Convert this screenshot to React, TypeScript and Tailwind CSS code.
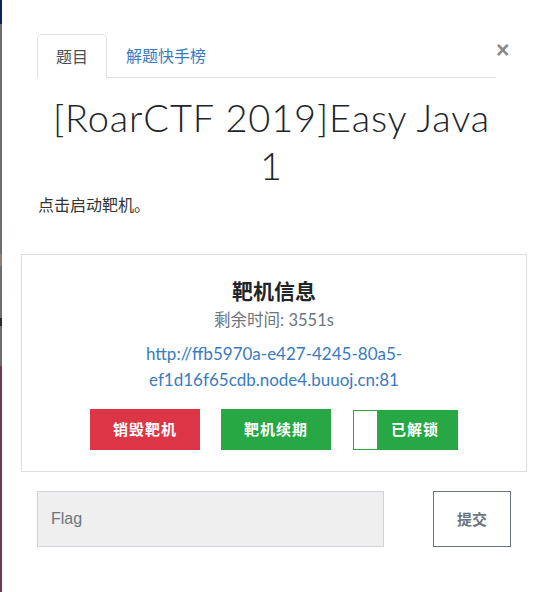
import React from "react";

export default function App() {
  return (
    <div className="w-[542px] h-[592px] flex bg-white overflow-hidden" style={{ fontFamily: "Lato, 'Noto Sans CJK SC', sans-serif" }}>
      <div className="w-[2px] h-full flex flex-col shrink-0">
        <div className="h-[24px] bg-[#0c2355]" />
        <div className="h-[206px] bg-[#6d6d6d]" />
        <div className="h-[4px] bg-[#5f7a5f]" />
        <div className="h-[20px] bg-[#6d6d6d]" />
        <div className="h-[12px] bg-[#8a7f70]" />
        <div className="h-[20px] bg-[#6d6d6d]" />
        <div className="h-[4px] bg-[#5f7a5f]" />
        <div className="h-[28px] bg-[#6d6d6d]" />
        <div className="h-[8px] bg-[#2a2a2a]" />
        <div className="h-[40px] bg-[#6d6d6d]" />
        <div className="flex-1 bg-[#6a3c52]" />
      </div>
      <div className="relative flex-1 flex flex-col">
        <button className="absolute left-[494px] top-[39px] text-[#8a8a8a] text-[23px] font-bold leading-none" style={{ fontFamily: "'Liberation Sans', Arial, sans-serif" }}>
          ×
        </button>
        <div className="mt-[34px] ml-[35px] w-[459px] flex border-b border-[#dee2e6] h-[44px]">
          <div className="w-[70px] h-[45px] border border-[#dee2e6] border-b-white rounded-t-[5px] bg-white flex items-center justify-center text-[16px] text-[#495057]">
            题目
          </div>
          <div className="pl-[19px] h-[44px] flex items-center text-[16px] text-[#3a7bbf]">解题快手榜</div>
        </div>
        <h1 className="mt-[15px] text-center text-[38px] leading-[48px] font-light text-[#212529] tracking-[0.85px] ml-[-1px]">
          [RoarCTF 2019]Easy Java
          <br />1
        </h1>
        <p className="mt-[3px] ml-[36px] text-[16px] leading-[24px] text-[#333]" style={{ fontFamily: "'Noto Sans CJK SC', sans-serif" }}>
          点击启动靶机。
        </p>
        <div className="mt-[38px] ml-[19px] w-[506px] h-[218px] border border-[#dddddd] flex flex-col items-center pt-[20px]">
          <div className="text-[21px] leading-[30px] font-bold text-[#212529]" style={{ fontFamily: "'Noto Sans CJK SC', sans-serif" }}>
            靶机信息
          </div>
          <div className="mt-[1px] text-[16.5px] leading-[28px] text-[#6c757d]">剩余时间: 3551s</div>
          <div className="mt-[7px] text-[17px] leading-[26px] text-[#3a7bbf] text-center">
            http://ffb5970a-e427-4245-80a5-
            <br />
            ef1d16f65cdb.node4.buuoj.cn:81
          </div>
          <div className="mt-[16px] flex items-center gap-[21px]" style={{ fontFamily: "'Noto Sans CJK SC', sans-serif" }}>
            <div className="w-[110px] h-[41px] bg-[#dc3545] text-white font-bold text-[15px] flex items-center justify-center tracking-[1px]">销毁靶机</div>
            <div className="w-[110px] h-[41px] bg-[#28a745] text-white font-bold text-[15px] flex items-center justify-center tracking-[1px]">靶机续期</div>
            <div className="ml-[1px] w-[105px] h-[40px] bg-[#28a745] border border-[#28a745] flex">
              <div className="w-[23px] h-full bg-white" />
              <div className="flex-1 text-white font-bold text-[15px] flex items-center justify-center tracking-[1px] pr-[4px]">已解锁</div>
            </div>
          </div>
        </div>
        <div className="mt-[19px] ml-[35px] flex">
          <div className="w-[347px] h-[56px] bg-[#efefef] border border-[#ced4da] flex items-center pl-[13px] text-[16px] text-[#6c757d]" style={{ fontFamily: "'Liberation Sans', Arial, sans-serif" }}>
            Flag
          </div>
          <div className="ml-[49px] w-[78px] h-[56px] border border-[#6c757d] flex items-center justify-center text-[15px] font-bold text-[#6c757d]" style={{ fontFamily: "'Noto Sans CJK SC', sans-serif" }}>
            提交
          </div>
        </div>
      </div>
    </div>
  );
}
